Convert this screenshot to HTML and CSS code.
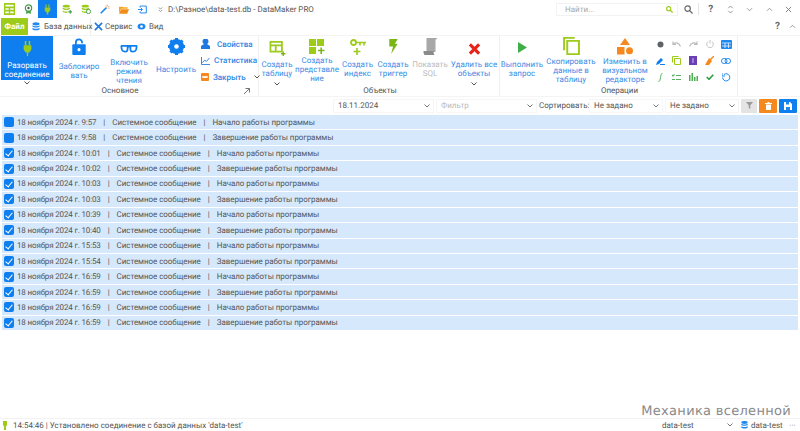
FILE: index.html
```html
<!DOCTYPE html>
<html lang="ru">
<head>
<meta charset="utf-8">
<title>DataMaker PRO</title>
<link rel="stylesheet" href="styles.css">
</head>
<body>
<div class="app">
  <header class="titlebar">
    <div class="qa"><svg width="11" height="12" viewBox="0 0 16 14" preserveAspectRatio="none"><rect width="16" height="14" fill="#9ccb1a"/><path d="M2 2h12v2H2zM2 6h5v2H2zM9 6h5v2H9zM2 10h5v2H2zM9 10h5v2H9z" fill="#fff"/></svg></div>
    <div class="qa"><svg width="9" height="11" viewBox="0 0 12 14"><circle cx="6" cy="5" r="4.200" fill="none" stroke="#43a047" stroke-width="1.600"/><circle cx="6" cy="5" r="1.600" fill="#555"/><path d="M3 9v4l3-1.500L9 13V9" fill="#43a047"/></svg></div>
    <div class="qa qa-active"><svg width="7" height="11" viewBox="0 0 10 14"><path d="M3 0v4M7 0v4" stroke="#9ccb1a" stroke-width="1.600"/><path d="M1 4h8v4l-2 3H6v3H4v-3H3L1 8z" fill="#9ccb1a"/></svg></div>
    <div class="qa"><svg width="10" height="10" viewBox="0 0 14 14"><ellipse cx="6" cy="3" rx="5" ry="2" fill="#9ccb1a"/><path d="M1 5c2 2 8 2 10 0v2c-2 2-8 2-10 0zM1 9c2 2 6 2 7 1v2c-2 1-5 1-7-1z" fill="#9ccb1a"/><path d="M9 11h5M11.500 8.500v5" stroke="#43a047" stroke-width="1.500"/></svg></div>
    <div class="qa"><svg width="10" height="10" viewBox="0 0 14 14"><ellipse cx="6" cy="3" rx="5" ry="2" fill="#9ccb1a"/><path d="M1 5c2 2 8 2 10 0v2c-2 2-8 2-10 0zM1 9c2 2 6 2 7 1v2c-2 1-5 1-7-1z" fill="#9ccb1a"/><circle cx="10.500" cy="10.500" r="3" fill="none" stroke="#43a047" stroke-width="1.300"/></svg></div>
    <div class="qa"><svg width="10" height="10" viewBox="0 0 14 14"><path d="M1 13 9 5" stroke="#1e88f0" stroke-width="2.200"/><path d="M10 1v2M13 4h-2M8 3l1 1M13 7l-1-1" stroke="#f08c1a" stroke-width="1.300"/></svg></div>
    <div class="qa"><svg width="10" height="9" viewBox="0 0 14 12"><path d="M0 2h5l1 1h6v2H3L0 11z" fill="#f5a623"/><path d="M3 5.500h11L11.500 12H0z" fill="#f08c1a"/></svg></div>
    <div class="qa"><svg width="9" height="9" viewBox="0 0 13 12"><path d="M3 3V1h9v10H3V9" fill="none" stroke="#1e88f0" stroke-width="1.400"/><path d="M0 6h6M4 3.500 6.500 6 4 8.500" fill="none" stroke="#1e88f0" stroke-width="1.400"/></svg></div>
    <div class="qa-more"><svg width="5" height="7" viewBox="0 0 7 8"><path d="M1 1l2.500 2.500L6 1M1 4.500 3.500 7 6 4.500" fill="none" stroke="#777"/></svg></div>
    <div class="doc-title">D:\Разное\data-test.db - DataMaker PRO</div>
    <div class="search"><span>Найти...</span><svg width="7" height="7" viewBox="0 0 9 9"><circle cx="3.500" cy="3.500" r="2.600" fill="none" stroke="#9ccb1a" stroke-width="1.500"/><path d="M5.500 5.500 8.500 8.500" stroke="#9ccb1a" stroke-width="1.600"/></svg></div>
    <div class="win-btns">
      <span class="wb wb-find"><svg width="9" height="9" viewBox="0 0 10 10"><circle cx="4" cy="4" r="3" fill="none" stroke="#666" stroke-width="1.300"/><path d="M6.200 6.200 9.500 9.500" stroke="#666" stroke-width="1.400"/></svg></span>
      <span class="wb-sep"></span>
      <span class="wb wb-q">?</span>
      <span class="wb"><svg width="7" height="9" viewBox="0 0 8 10"><path d="M1.500 3.500 4 1l2.500 2.500M1.500 6.500 4 9l2.500-2.500" fill="none" stroke="#888"/></svg></span>
      <span class="wb"><svg width="7" height="5" viewBox="0 0 8 6"><path d="M1 1.500 4 4.500 7 1.500" fill="none" stroke="#888"/></svg></span>
      <span class="wb"><svg width="7" height="5" viewBox="0 0 8 6"><path d="M1 4.500 4 1.500 7 4.500" fill="none" stroke="#888"/></svg></span>
      <span class="wb"><svg width="7" height="7" viewBox="0 0 8 8"><path d="M1 1l6 6M7 1 1 7" stroke="#777"/></svg></span>
    </div>
  </header>

  <nav class="tabs">
    <div class="tab tab-file">Файл</div>
    <div class="tab tab-on"><svg width="8" height="9" viewBox="0 0 9 10"><ellipse cx="4.500" cy="2" rx="4" ry="1.800" fill="#1e88f0"/><path d="M.5 3.500c1.500 1.500 6.500 1.500 8 0V5c-1.500 1.500-6.500 1.500-8 0zM.5 6.500c1.500 1.500 6.500 1.500 8 0V8c-1.500 1.800-6.500 1.800-8 0z" fill="#1e88f0"/></svg>База данных</div>
    <div class="tab tab-tools"><svg width="9" height="9" viewBox="0 0 10 10"><path d="M1 1l8 8M9 1 1 9" stroke="#1e78e0" stroke-width="1.800"/></svg>Сервис</div>
    <div class="tab tab-view"><svg width="9" height="7" viewBox="0 0 10 8"><ellipse cx="5" cy="4" rx="4.500" ry="3.500" fill="#1e88f0"/><circle cx="5" cy="4" r="1.500" fill="#fff"/></svg>Вид</div>
    <div class="tabs-end"><span class="wb-q">?</span><svg width="7" height="5" viewBox="0 0 8 6"><path d="M1 4.500 4 1.500 7 4.500" fill="none" stroke="#888"/></svg></div>
  </nav>

  <section class="ribbon">
    <div class="group g-main">
      <div class="group-body">
        <div class="rb rb-primary rb-w1">
          <svg class="ic" width="9" height="15" viewBox="0 0 14 21" preserveAspectRatio="none"><path d="M4 0v6M10 0v6" stroke="#9ccb1a" stroke-width="2.400"/><path d="M1 6h12v6l-3 4H8v5H6v-5H4l-3-4z" fill="#9ccb1a"/></svg>
          <span class="rb-label">Разорвать<br>соединение</span>
        </div>
        <div class="rb rb-w2">
          <svg class="ic" width="14" height="17" viewBox="0 0 15 19"><path d="M4 8V5a3.500 3.500 0 0 1 7 0v1" fill="none" stroke="#0f7ff0" stroke-width="2"/><rect y="7" width="15" height="12" rx="1" fill="#0f7ff0"/><circle cx="7.500" cy="13" r="1.700" fill="#fff"/></svg>
          <span class="rb-label">Заблокиро<br>вать</span>
        </div>
        <div class="rb rb-w3">
          <svg class="ic" width="20" height="9" viewBox="0 0 20 10"><path d="M1 2h18M1.500 2c0 5 1 6.500 4 6.500S8.500 7 8.500 3M18.500 2c0 5-1 6.500-4 6.500S11.500 7 11.500 3M8.500 3h3" fill="none" stroke="#0f7ff0" stroke-width="2"/></svg>
          <span class="rb-label">Включить<br>режим<br>чтения</span>
        </div>
        <div class="rb rb-w4">
          <svg class="ic" width="17" height="17" viewBox="0 0 18 18"><circle cx="9" cy="9" r="6" fill="none" stroke="#0f7ff0" stroke-width="4"/><path d="M9 0v18M0 9h18M2.600 2.600l12.800 12.800M15.400 2.600 2.600 15.400" stroke="#0f7ff0" stroke-width="3.200"/><circle cx="9" cy="9" r="2.400" fill="#fff"/></svg>
          <span class="rb-label">Настроить</span>
        </div>
        <div class="small-col">
          <div class="sm sm-a"><svg width="9" height="10" viewBox="0 0 9 10"><path d="M0 10V7c1-1 2-1 3-2a3 3 0 1 1 3 0c1 1 2 1 3 2v3z" fill="#1e78e0"/></svg>Свойства</div>
          <div class="sm"><svg width="9" height="8" viewBox="0 0 10 9"><path d="M.5 0v8.500H10" fill="none" stroke="#1e78e0"/><path d="M1.500 6.500 4 3.500 6 5l3.500-4" fill="none" stroke="#1e78e0"/></svg>Статистика</div>
          <div class="sm"><svg width="8" height="8" viewBox="0 0 9 9"><rect width="9" height="9" rx="1" fill="#f5891f"/><rect x="1.500" y="3.500" width="6" height="2" fill="#fff"/></svg>Закрыть<svg class="sm-caret" width="6" height="4" viewBox="0 0 6 4"><path d="M.5.5 3 3 5.500.5" fill="none" stroke="#555"/></svg></div>
        </div>
      </div>
      <div class="group-name gn-main">Основное<svg class="launcher" width="6" height="6" viewBox="0 0 6 6"><path d="M0 6 5.500.5M1.500.5h4v4" fill="none" stroke="#777"/></svg></div>
      <svg class="rb-caret" width="6" height="4" viewBox="0 0 6 4"><path d="M.5.5 3 3 5.500.5" fill="none" stroke="#555"/></svg>
    </div>

    <div class="group g-obj">
      <div class="group-body">
        <div class="rb rb-w5">
          <svg class="ic" width="17" height="15" viewBox="0 0 18 17"><path d="M1 1h13v11H1zM1 5h13M7 5v7" fill="none" stroke="#9ccb1a" stroke-width="2"/><path d="M13 14.500h5M15.500 12v5" stroke="#7cb518" stroke-width="1.600"/></svg>
          <span class="rb-label">Создать<br>таблицу</span>
          <svg class="caret-in" width="6" height="4" viewBox="0 0 6 4"><path d="M.5.5 3 3 5.500.5" fill="none" stroke="#555"/></svg>
        </div>
        <div class="rb rb-w6">
          <svg class="ic" width="16" height="15" viewBox="0 0 16 15"><path d="M0 0h7v7H0zM8 0h7v7H8zM0 8h7v7H0z" fill="#9ccb1a"/><path d="M9 11.500h6.500M12.200 8.500v6.500" stroke="#7cb518" stroke-width="1.600"/></svg>
          <span class="rb-label">Создать<br>представле<br>ние</span>
        </div>
        <div class="rb rb-w7">
          <svg class="ic" width="16" height="16" viewBox="0 0 16 16"><circle cx="3.500" cy="3.500" r="2.500" fill="none" stroke="#9ccb1a" stroke-width="1.800"/><path d="M6 3.500h10M10 3.500v3M14 3.500v3M7 9v7M3.500 12.500h7" stroke="#9ccb1a" stroke-width="1.600"/></svg>
          <span class="rb-label">Создать<br>индекс</span>
        </div>
        <div class="rb rb-w8">
          <svg class="ic" width="9" height="15" viewBox="0 0 9 16"><path d="M0 0h9L6 5h3L2 16l2-8H0z" fill="#7cb518"/></svg>
          <span class="rb-label">Создать<br>триггер</span>
        </div>
        <div class="rb rb-w9 rb-off">
          <svg class="ic" width="15" height="17" viewBox="0 0 14 17"><path d="M3 0h11l-2 2v12H3z" fill="#a8a8a8"/><path d="M0 13h10c0 3 1 4 1 4H1c-1-1-1-3-1-4z" fill="#8a8a8a"/></svg>
          <span class="rb-label">Показать<br>SQL</span>
        </div>
        <div class="rb rb-w10">
          <svg class="ic" width="13" height="12" viewBox="0 0 13 13"><path d="M1.500 1.500l10 10M11.500 1.500l-10 10" stroke="#e8231a" stroke-width="3.400"/></svg>
          <span class="rb-label">Удалить все<br>объекты</span>
          <svg class="caret-in" width="6" height="4" viewBox="0 0 6 4"><path d="M.5.5 3 3 5.500.5" fill="none" stroke="#555"/></svg>
        </div>
      </div>
      <div class="group-name">Объекты</div>
    </div>

    <div class="group g-ops">
      <div class="group-body">
        <div class="rb rb-w11">
          <svg class="ic" width="9" height="11" viewBox="0 0 10 12"><path d="M0 0l10 6-10 6z" fill="#3fae49"/></svg>
          <span class="rb-label">Выполнить<br>запрос</span>
        </div>
        <div class="rb rb-w12">
          <svg class="ic" width="17" height="18" viewBox="0 0 16 19" preserveAspectRatio="none"><path d="M1 14V1h10M4 4h11v14H4z" fill="none" stroke="#9ccb1a" stroke-width="1.800"/></svg>
          <span class="rb-label">Скопировать<br>данные в<br>таблицу</span>
        </div>
        <div class="rb rb-w13">
          <svg class="ic" width="16" height="17" viewBox="0 0 16 17"><path d="M8 0l5 7H3z" fill="#f5891f"/><rect y="9" width="7.500" height="7.500" fill="#f5891f"/><circle cx="12.500" cy="12.800" r="3.500" fill="#f5891f"/></svg>
          <span class="rb-label">Изменить в<br>визуальном<br>редакторе</span>
        </div>
        <div class="icon-grid">
          <svg width="7" height="7" viewBox="0 0 7 7"><circle cx="3.500" cy="3.500" r="3" fill="#5f6368"/></svg>
          <svg width="9" height="6" viewBox="0 0 9 6"><path d="M8.500 5.500C7 2 4 1 1.500 3M1 .5v3h3" fill="none" stroke="#bbb" stroke-width="1.200"/></svg>
          <svg width="9" height="6" viewBox="0 0 9 6"><path d="M.5 5.500C2 2 5 1 7.500 3M8 .5v3H5" fill="none" stroke="#bbb" stroke-width="1.200"/></svg>
          <svg width="8" height="8" viewBox="0 0 8 8"><path d="M2.200 1.600a3.300 3.300 0 1 0 3.600 0M4 0v3.500" fill="none" stroke="#c4c4c4"/></svg>
          <svg width="11" height="9" viewBox="0 0 11 9"><rect width="11" height="9" rx="1" fill="#1e88f0"/><path d="M1 3h9M1 6h9M4 3v5M7.500 3v5" stroke="#fff" stroke-width=".7"/></svg>

          <svg width="9" height="8" viewBox="0 0 9 8"><path d="M0 8l1-3 4-4 2 2-4 4z" fill="#0f7ff0"/><path d="M4 7.500h5" stroke="#0f7ff0"/></svg>
          <svg width="9" height="9" viewBox="0 0 9 9"><path d="M.5 6.500V.5h6M2.500 2.500h6v6h-6z" fill="none" stroke="#9ccb1a"/></svg>
          <svg width="8" height="9" viewBox="0 0 8 9"><rect width="8" height="9" fill="#6a3fb5"/><path d="M4 2v5" stroke="#cdbcec"/></svg>
          <svg width="9" height="9" viewBox="0 0 9 9"><path d="M9 0 5 4" stroke="#f5891f" stroke-width="1.400"/><path d="M4 2l3 3-3 4H0z" fill="#f5891f"/></svg>
          <svg width="10" height="6" viewBox="0 0 10 6"><rect x=".5" y=".5" width="5.500" height="5" rx="2.400" fill="none" stroke="#1e88f0"/><rect x="4" y=".5" width="5.500" height="5" rx="2.400" fill="none" stroke="#1e88f0"/></svg>

          <svg width="5" height="9" viewBox="0 0 5 9"><path d="M4.500.5C3 .5 3 2 2.500 4.500S2 8.500.5 8.500" fill="none" stroke="#57b05f"/></svg>
          <svg width="9" height="7" viewBox="0 0 9 7"><path d="M0 1l1 1 1.500-1.500M4 1.500h5M0 5.500h3M4 5.500h5" fill="none" stroke="#57b05f" stroke-width="1.100"/></svg>
          <svg width="9" height="8" viewBox="0 0 9 8"><path d="M0 2h1.500v6H0zM2.500 0H4v8H2.500zM5 4h1.500v4H5zM7.500 3H9v5H7.500z" fill="#4caf50"/></svg>
          <svg width="8" height="6" viewBox="0 0 8 6"><path d="M.7 3l2.300 2.300L7.300.7" fill="none" stroke="#2f9e44" stroke-width="1.600"/></svg>
          <svg width="9" height="9" viewBox="0 0 9 9"><path d="M2 1.500a3.600 3.600 0 1 1-1.400 3M0 0v3h3" fill="none" stroke="#1e88f0"/></svg>
        </div>
      </div>
      <div class="group-name">Операции</div>
    </div>
  </section>

  <section class="filterbar">
    <div class="sel sel-date"><span>18.11.2024</span><svg width="6" height="4" viewBox="0 0 6 4"><path d="M.5.5 3 3 5.500.5" fill="none" stroke="#777"/></svg></div>
    <div class="sel sel-date sel-ghost"><span>Фильтр</span><svg width="6" height="4" viewBox="0 0 6 4"><path d="M.5.5 3 3 5.500.5" fill="none" stroke="#777"/></svg></div>
    <label class="sort-label">Сортировать:</label>
    <div class="sel sel-sort"><span>Не задано</span><svg width="6" height="4" viewBox="0 0 6 4"><path d="M.5.5 3 3 5.500.5" fill="none" stroke="#777"/></svg></div>
    <div class="sel sel-sort"><span>Не задано</span><svg width="6" height="4" viewBox="0 0 6 4"><path d="M.5.5 3 3 5.500.5" fill="none" stroke="#777"/></svg></div>
    <div class="fb fb-gray"><svg width="7" height="7" viewBox="0 0 7 7"><path d="M0 0h7L4.300 3.200V7L2.700 6V3.200z" fill="#999"/></svg></div>
    <div class="fb fb-orange"><svg width="7" height="8" viewBox="0 0 7 8"><path d="M0 1h7v1H0zM1 2.500h5V8H1zM2.500 0h2v1h-2z" fill="#fff"/></svg></div>
    <div class="fb fb-blue"><svg width="8" height="8" viewBox="0 0 8 8"><path d="M0 0h6l2 2v6H0z" fill="#fff"/><path d="M2 0h3v2.500H2zM2 5h4v3H2z" fill="#1e88f0"/></svg></div>
  </section>

  <main class="log">
    <div class="row"><span class="cb"></span><span class="dt">18 ноября 2024 г. 9:57</span><i>|</i>Системное сообщение<i>|</i>Начало работы программы</div>
    <div class="row"><span class="cb"></span><span class="dt">18 ноября 2024 г. 9:58</span><i>|</i>Системное сообщение<i>|</i>Завершение работы программы</div>
    <div class="row"><span class="cb cb-on"></span><span class="dt">18 ноября 2024 г. 10:01</span><i>|</i>Системное сообщение<i>|</i>Начало работы программы</div>
    <div class="row"><span class="cb cb-on"></span><span class="dt">18 ноября 2024 г. 10:02</span><i>|</i>Системное сообщение<i>|</i>Завершение работы программы</div>
    <div class="row"><span class="cb cb-on"></span><span class="dt">18 ноября 2024 г. 10:03</span><i>|</i>Системное сообщение<i>|</i>Начало работы программы</div>
    <div class="row"><span class="cb cb-on"></span><span class="dt">18 ноября 2024 г. 10:03</span><i>|</i>Системное сообщение<i>|</i>Завершение работы программы</div>
    <div class="row"><span class="cb cb-on"></span><span class="dt">18 ноября 2024 г. 10:39</span><i>|</i>Системное сообщение<i>|</i>Начало работы программы</div>
    <div class="row"><span class="cb cb-on"></span><span class="dt">18 ноября 2024 г. 10:40</span><i>|</i>Системное сообщение<i>|</i>Завершение работы программы</div>
    <div class="row"><span class="cb cb-on"></span><span class="dt">18 ноября 2024 г. 15:53</span><i>|</i>Системное сообщение<i>|</i>Начало работы программы</div>
    <div class="row"><span class="cb cb-on"></span><span class="dt">18 ноября 2024 г. 15:54</span><i>|</i>Системное сообщение<i>|</i>Завершение работы программы</div>
    <div class="row"><span class="cb cb-on"></span><span class="dt">18 ноября 2024 г. 16:59</span><i>|</i>Системное сообщение<i>|</i>Начало работы программы</div>
    <div class="row"><span class="cb cb-on"></span><span class="dt">18 ноября 2024 г. 16:59</span><i>|</i>Системное сообщение<i>|</i>Завершение работы программы</div>
    <div class="row"><span class="cb cb-on"></span><span class="dt">18 ноября 2024 г. 16:59</span><i>|</i>Системное сообщение<i>|</i>Начало работы программы</div>
    <div class="row"><span class="cb cb-on"></span><span class="dt">18 ноября 2024 г. 16:59</span><i>|</i>Системное сообщение<i>|</i>Завершение работы программы</div>
  </main>

  <div class="watermark">Механика вселенной</div>

  <footer class="status">
    <svg class="st-ic" width="4" height="9" viewBox="0 0 4 9"><path d="M0 0h4v4L3 5.500V9H1V5.500L0 4z" fill="#9ccb1a"/></svg>
    <span class="st-msg">14:54:46 | Установлено соединение с базой данных 'data-test'</span>
    <span class="st-db">data-test<svg width="6" height="4" viewBox="0 0 6 4"><path d="M.5.5 3 3 5.500.5" fill="none" stroke="#777"/></svg></span>
    <span class="st-cur"><svg width="7" height="8" viewBox="0 0 7 8"><ellipse cx="3.500" cy="1.500" rx="3.200" ry="1.400" fill="#1e88f0"/><path d="M.3 2.800c1 1 5.400 1 6.400 0V4c-1 1-5.400 1-6.400 0zM.3 5.200c1 1 5.400 1 6.400 0v1.300c-1 1.400-5.400 1.400-6.400 0z" fill="#1e88f0"/></svg>data-test</span>
    <span class="st-more">···</span>
  </footer>
</div>
</body>
</html>
```

FILE: styles.css
```css
* { box-sizing: border-box; }
html, body { margin: 0; height: 100%; }
body {
  font-family: Roboto, "Open Sans", sans-serif;
  font-size: 8px;
  text-rendering: geometricPrecision;
  color: #555;
  background: #fff;
  overflow: hidden;
}
svg { display: block; flex: none; }
.app { position: relative; width: 800px; height: 431px; display: flex; flex-direction: column; }

/* title row */
.titlebar { height: 18px; display: flex; align-items: center; flex: none; }
.qa { width: 19px; height: 18px; display: flex; align-items: center; justify-content: center; flex: none; }
.qa-active { background: #0f7ff0; }
.qa-more { width: 10px; margin-left: 3px; display: flex; justify-content: center; }
.doc-title { margin-left: 3px; flex: 1; color: #555; white-space: nowrap; }
.search { width: 122px; height: 13px; display: flex; align-items: center; justify-content: space-between; padding: 0 4px 0 8px; border: 1px solid #f2f2f2; color: #aaa; flex: none; }
.win-btns { display: flex; align-items: center; height: 18px; width: 122px; flex: none; padding-left: 2px; }
.wb { width: 19.500px; display: flex; justify-content: center; align-items: center; flex: none; }
.wb-find { width: 16px; }
.wb-sep { width: 1px; height: 12px; background: #e4e4e4; margin: 0 2px; flex: none; }
.wb-q { color: #666; font-weight: 700; font-size: 10px; }

/* tabs */
.tabs { height: 17px; display: flex; align-items: stretch; flex: none; }
.tab { display: flex; align-items: center; gap: 3px; white-space: nowrap; flex: none; }
.tab-file { width: 27px; margin-left: 1px; background: #9ccb1a; color: #fff; font-weight: 700; justify-content: center; }
.tab-on { width: 63px; padding-left: 4px; gap: 4px; border-right: 1px solid #eee; }
.tab-tools { width: 46px; padding-left: 3px; gap: 2px; }
.tabs-end { margin-left: auto; display: flex; align-items: center; gap: 9px; padding-right: 4px; }

/* ribbon */
.ribbon { height: 62px; display: flex; gap: 2px; flex: none; border-top: 1px solid #f4f4f4; border-bottom: 1px solid #f4f4f4; }
.group { position: relative; display: flex; flex-direction: column; border-right: 1px solid #f0f0f0; flex: none; }
.g-main { width: 259px; }
.g-obj { width: 239px; }
.g-ops { width: 236px; }
.group-body { height: 50px; display: flex; align-items: flex-start; color: #3b8ce6; }
.group-name { position: relative; height: 10px; line-height: 10px; text-align: center; color: #555; }
.gn-main { padding-right: 18px; }
.launcher { position: absolute; right: 8px; top: 2px; }
.rb-caret { position: absolute; left: 24px; top: 45px; }

.rb { display: flex; flex-direction: column; align-items: center; text-align: center; flex: none; line-height: 9px; position: relative; height: 50px; }
.rb-label { display: block; margin-top: 5px; white-space: nowrap; }
.caret-in { position: absolute; top: 46px; left: 50%; margin-left: -3px; }
.rb-off { color: #bbb; }

.rb-primary { background: #0f7ff0; color: #fff; margin-left: 1px; height: 44px; }
.rb-w1 { width: 52px; }
.rb-w1 .ic { margin-top: 5px; }
.rb-w1 .rb-label { margin-top: 5px; }
.rb-w2 { width: 48px; margin-left: 2px; }
.rb-w2 .ic { margin-top: 2px; }
.rb-w2 .rb-label { margin-top: 7px; }
.rb-w3 { width: 48px; margin-left: 2px; }
.rb-w3 .ic { margin-top: 8px; }
.rb-w3 .rb-label { margin-top: 5px; }
.rb-w4 { width: 42px; margin-left: 2px; }
.rb-w4 .ic { margin-top: 2px; }
.rb-w4 .rb-label { margin-top: 10px; }

.rb-w5 { width: 32px; }
.rb-w5 .ic { margin-top: 5px; }
.rb-w5 .rb-label { margin-top: 4px; }
.rb-w6 { width: 44px; margin-left: 2px; }
.rb-w6 .ic { margin-top: 3px; }
.rb-w6 .rb-label { margin-top: 2px; }
.rb-w7 { width: 37px; }
.rb-w7 .ic { margin-top: 3px; }
.rb-w7 .rb-label { margin-top: 5px; }
.rb-w8 { width: 34px; }
.rb-w8 .ic { margin-top: 3px; }
.rb-w8 .rb-label { margin-top: 6px; }
.rb-w9 { width: 40px; }
.rb-w9 .ic { margin-top: 2px; }
.rb-w9 .rb-label { margin-top: 5px; }
.rb-w10 { width: 48px; }
.rb-w10 .ic { margin-top: 7px; }
.rb-w10 .rb-label { margin-top: 5px; }

.rb-w11 { width: 40px; }
.rb-w11 .ic { margin-top: 6px; }
.rb-w11 .rb-label { margin-top: 7px; }
.rb-w12 { width: 58px; }
.rb-w12 .ic { margin-top: 1px; }
.rb-w12 .rb-label { margin-top: 2px; }
.rb-w13 { width: 50px; }
.rb-w13 .ic { margin-top: 2px; }
.rb-w13 .rb-label { margin-top: 2px; }

.small-col { width: 56px; margin-left: 3px; display: flex; flex-direction: column; font-weight: 500; color: #2f84e4; letter-spacing: -.05px; }
.sm { height: 16.500px; display: flex; align-items: center; gap: 4px; white-space: nowrap; padding-left: 1px; }
.sm-a { gap: 7px; }
.sm-caret { margin-left: 4px; }

.icon-grid { margin-left: 2px; display: grid; grid-template-columns: repeat(5, 16.500px); grid-auto-rows: 16.500px; place-items: center; }

/* filter bar */
.filterbar { height: 17px; flex: none; display: flex; align-items: center; padding-left: 333px; gap: 2px; }
.sel { height: 14px; display: flex; align-items: center; justify-content: space-between; padding: 0 3px 0 4px; background: #fff; color: #555; flex: none; border: 1px solid #f6f6f6; }
.sel-date { width: 101px; }
.sel-ghost { color: #bbb; }
.sel-sort { width: 74px; }
.sort-label { width: 50px; flex: none; white-space: nowrap; color: #555; margin-right: -2px; }
.fb { width: 18px; height: 14px; border-radius: 1px; display: flex; align-items: center; justify-content: center; flex: none; }
.fb-gray { width: 16px; background: #e4e4e4; }
.fb-orange { background: #f5891f; }
.fb-blue { background: #0f7ff0; }

/* log */
.log { flex: 1; padding: 1px 2px 0; }
.row { height: 15.440px; display: flex; align-items: center; background: #d6e9fc; border-bottom: 1px solid #fff; padding-left: 2px; white-space: nowrap; color: #555; letter-spacing: -.05px; }
.row i { font-style: normal; margin: 0 7px; }
.dt { letter-spacing: -.15px; }
.cb { width: 10px; height: 10px; border-radius: 2px; background: #0f7ff0; margin-right: 3px; flex: none; position: relative; }
.cb-on::after { content: ""; position: absolute; left: 3px; top: 1px; width: 3px; height: 6px; border: solid #fff; border-width: 0 1.500px 1.500px 0; transform: rotate(40deg); }

.watermark { position: absolute; right: 9px; top: 404px; font-family: "DejaVu Sans", sans-serif; font-size: 13px; color: #8a8a8a; letter-spacing: .3px; white-space: nowrap; }

/* status */
.status { height: 13px; flex: none; display: flex; align-items: center; border-top: 1px solid #f2f2f2; padding-left: 3px; color: #555; white-space: nowrap; }
.st-msg { margin-left: 6px; flex: 1; }
.st-db { width: 76px; display: flex; align-items: center; justify-content: space-between; padding-right: 5px; }
.st-cur { display: flex; align-items: center; gap: 3px; margin-left: 3px; width: 44px; }
.st-more { width: 15px; color: #777; text-align: center; }
```
